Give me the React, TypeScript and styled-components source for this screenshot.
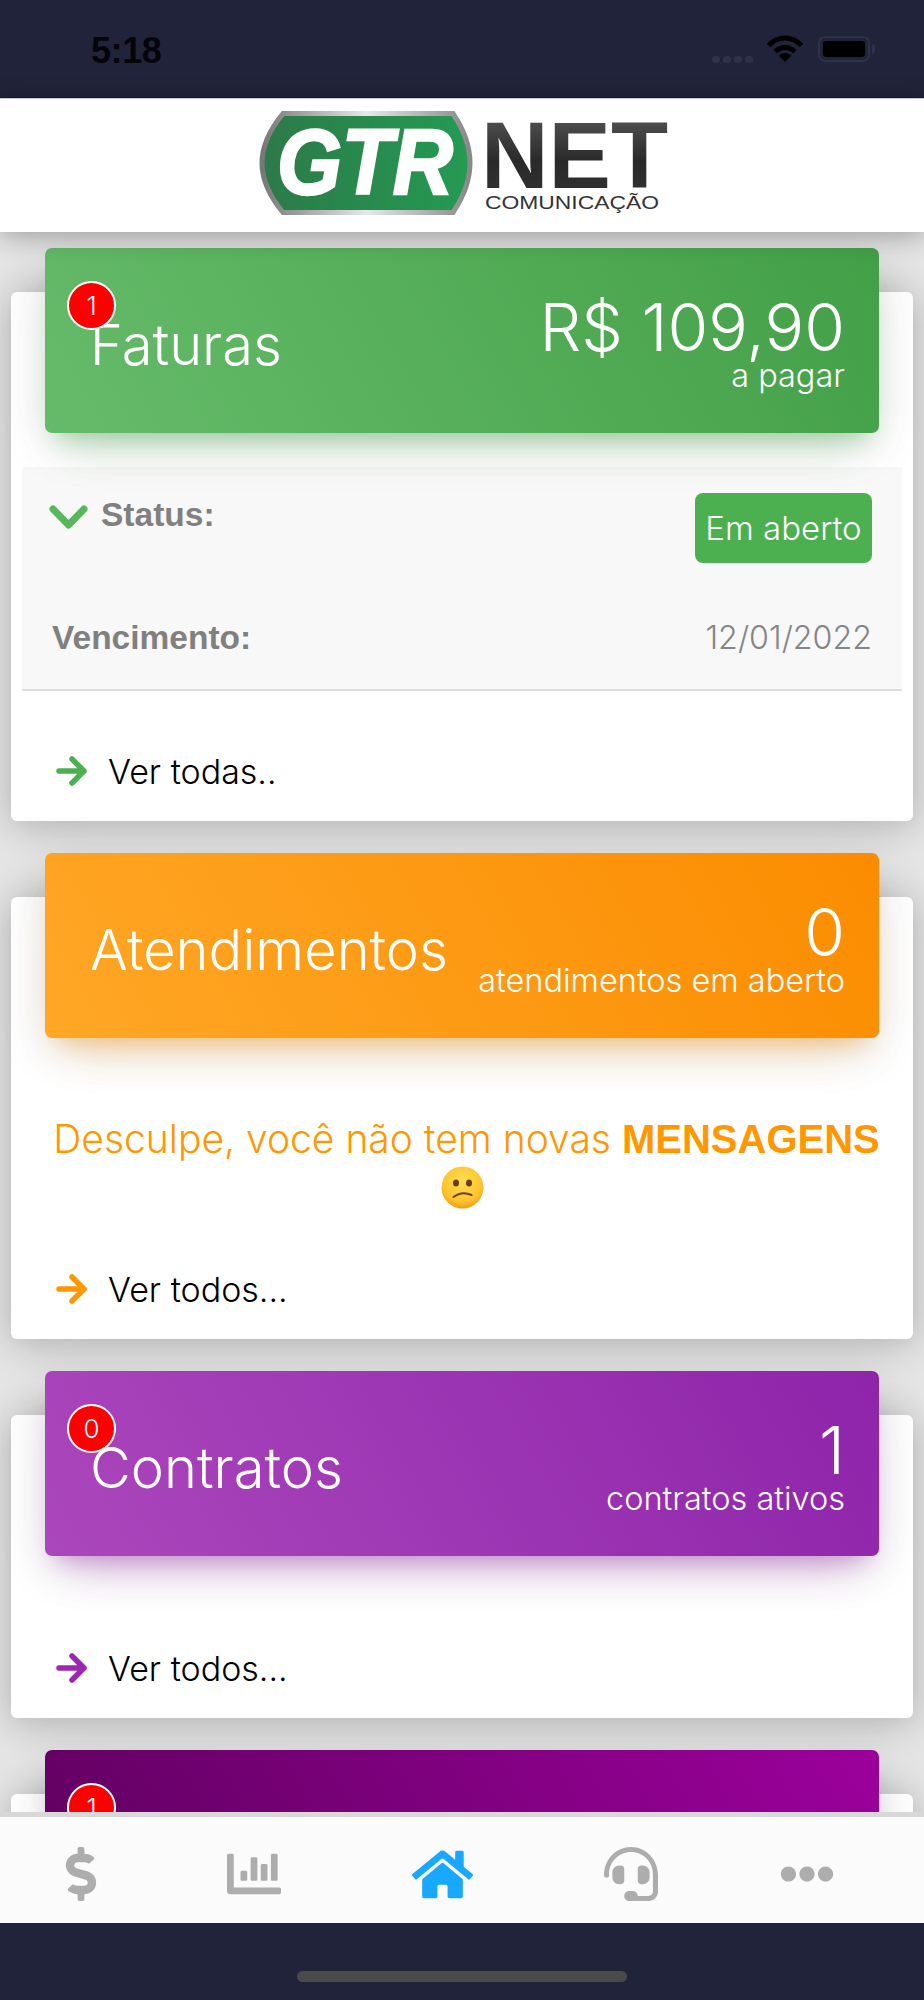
import React from "react";
import styled, { createGlobalStyle } from "styled-components";
import { FaDollarSign, FaChartBar, FaHome, FaHeadset, FaEllipsisH } from "react-icons/fa";

const SANS = `"Liberation Sans", Arial, sans-serif`;
const LIGHT = `Inter, "Liberation Sans", sans-serif`;

const Global = createGlobalStyle`
  html, body { margin: 0; padding: 0; background: #21233a; }
  * { box-sizing: border-box; }
`;

const Page = styled.div`
  width: 924px; height: 2000px; display: flex; flex-direction: column; overflow: hidden;
  font-family: ${LIGHT}; font-weight: 300;
`;
const StatusBar = styled.div`
  flex: 0 0 98px; background: #21233a; display: flex; align-items: center; justify-content: space-between;
  padding: 0 54px 0 91px; border-bottom: 1px solid #15162a;
`;
const Clock = styled.span`
  font-family: ${SANS}; font-weight: 700; font-size: 36px; color: #050509; letter-spacing: -0.4px; margin-top: 5px;
`;
const StatusIcons = styled.div`display: flex; align-items: center;`;
const Signal = styled.div`display: flex; gap: 3px; margin: 21px 14px 0 0;`;
const SignalDot = styled.span`width: 8px; height: 7px; border-radius: 3px; background: #2f3148;`;
const Battery = styled.div`
  position: relative; margin-left: 15px; width: 52px; height: 26px; padding: 3px;
  border: 2px solid #2f3148; border-radius: 7px;
`;
const BatteryFill = styled.div`width: 100%; height: 100%; background: #000; border-radius: 3px;`;
const BatteryCap = styled.div`
  position: absolute; right: -7px; top: 6px; width: 3px; height: 10px; background: #2f3148; border-radius: 0 3px 3px 0;
`;
const TopBar = styled.header`
  flex: 0 0 134px; background: #fff; display: flex; justify-content: center; align-items: center;
  border-top: 1px solid #c9ccd8; position: relative; z-index: 3; box-shadow: 0 4px 24px rgba(0,0,0,.3);
`;
const Content = styled.main`
  flex: 1 1 0; min-height: 0; overflow: hidden; background: #e4e4e4; padding: 60px 11px 0;
  display: flex; flex-direction: column; gap: 76px;
`;
const Card = styled.section`
  flex: none; background: #fff; border-radius: 6px;
  box-shadow: 0 4px 36px rgba(0,0,0,.24);
`;
const CardHead = styled.div<{ $from: string; $to: string; $glow: string }>`
  position: relative; height: 185px; margin: -44px 34px 0; border-radius: 7px; color: #fff;
  display: flex; align-items: center; justify-content: space-between; padding: 0 34px 0 45px;
  background: linear-gradient(60deg, ${p => p.$from}, ${p => p.$to});
  box-shadow: 0 30px 50px -25px ${p => p.$glow}, 0 10px 50px 0 rgba(0,0,0,.12), 0 17px 20px -12px ${p => p.$glow};
`;
const Badge = styled.span`
  position: absolute; left: 22px; top: 33px; width: 49px; height: 49px; border-radius: 50%;
  background: #f00; border: 2px solid #fff; color: #fff; display: flex; align-items: center; justify-content: center;
  font-size: 26px; z-index: 1;
`;
const Title = styled.h2`margin: 8px 0 0; font-size: 56px; font-weight: 300; line-height: 60px; white-space: nowrap;`;
const Figures = styled.div`text-align: right; margin-top: 4px;`;
const Value = styled.div`font-size: 66px; line-height: 66px;`;
const ValueLabel = styled.div`font-size: 32.5px; line-height: 32px;`;
const Panel = styled.div`
  margin: 34px 11px 0; padding: 26px 30px 21px; background: #f8f8f8; border-bottom: 2px solid #ddd;
`;
const PanelRow = styled.div<{ $gap?: number }>`
  display: flex; justify-content: space-between; align-items: flex-start; margin-top: ${p => p.$gap ?? 0}px;
`;
const StatusLabel = styled.div`display: flex; align-items: center; gap: 13px; margin-left: -3px; height: 44px;`;
const ChevronIcon = styled.svg`flex: none; margin-top: 4px;`;
const Label = styled.span`font-family: ${SANS}; font-weight: 700; font-size: 33.500px; line-height: 60px; color: #808080;`;
const Pill = styled.span`
  width: 177px; height: 70px; background: #4caf50; border-radius: 8px; color: #fff;
  display: flex; align-items: center; justify-content: center; font-size: 33px;
`;
const DateText = styled.span`font-size: 32.200px; line-height: 60px; color: #858585;`;
const Footer = styled.div<{ $top?: number }>`
  height: 100px; margin-top: ${p => p.$top ?? 0}px; padding-left: 45px; display: flex; align-items: center; gap: 21px;
  font-size: 34px; color: #000;
`;
const Message = styled.div`
  height: 201px; padding-top: 78px; text-align: center; color: #ff9800; font-size: 39px; line-height: 46px;
`;
const MessageLine = styled.div`padding-left: 9px; white-space: nowrap;`;
const Strong = styled.strong`font-family: ${SANS}; font-weight: 700; font-size: 40px;`;
const Face = styled.svg`display: block; margin: 4px auto 0;`;
const TabBar = styled.nav`
  flex: 0 0 111px; position: relative; z-index: 2; background: #fbfbfb; border-top: 5px solid #d8d8d8; padding-top: 8px;
  display: grid; grid-template-columns: 161px 186px 191px 186px 165px; align-items: center; justify-items: center;
`;
const Tab = styled.span<{ $active?: boolean }>`
  display: flex; color: ${p => (p.$active ? "#18a8ff" : "#adadad")};
`;
const HomeArea = styled.div`
  flex: 0 0 77px; background: #21233a; display: flex; justify-content: center; padding-top: 48px;
`;
const HomeBar = styled.div`width: 330px; height: 11px; border-radius: 6px; background: #4a4a4a;`;

const Wifi = () => (
  <svg width="36" height="27" viewBox="0 0 36 27" fill="none" stroke="#000" strokeWidth="5">
    <path d="M1.500 10.500C11 .5 25 .5 34.500 10.500" />
    <path d="M8 16.500C14 11 22 11 28 16.500" />
    <path d="M18 27L11.500 20.500Q18 15.500 24.500 20.500Z" fill="#000" stroke="none" />
  </svg>
);

const Chevron = () => (
  <ChevronIcon width="39" height="26" viewBox="0 0 39 26" fill="none" stroke="#57b85b" strokeWidth="7" strokeLinecap="round" strokeLinejoin="round">
    <path d="M4 5l15.500 16L35 5" />
  </ChevronIcon>
);

const Arrow = ({ color }: { color: string }) => (
  <svg width="31" height="30" viewBox="0 0 31 30" fill="none" stroke={color} strokeWidth="5.500" strokeLinecap="round" strokeLinejoin="round">
    <path d="M3 15h25M16 3l12 12-12 12" />
  </svg>
);

const Logo = () => (
  <svg width="420" height="110" viewBox="0 0 420 110">
    <defs>
      <linearGradient id="silver" x1="0" x2="1" y1="0" y2="0">
        <stop offset="0" stopColor="#777" />
        <stop offset=".5" stopColor="#e8e8e8" />
        <stop offset="1" stopColor="#888" />
      </linearGradient>
      <linearGradient id="green" x1="0" x2="1" y1="0" y2="0">
        <stop offset="0" stopColor="#2c7a48" />
        <stop offset="1" stopColor="#249b53" />
      </linearGradient>
      <linearGradient id="steel" x1="0" x2="0" y1="0" y2="1">
        <stop offset="0" stopColor="#5f5f5f" />
        <stop offset=".55" stopColor="#2a2a2a" />
        <stop offset="1" stopColor="#333" />
      </linearGradient>
    </defs>
    <path d="M31 2.500H201Q218 28 218 52T201 101.500H31Q10 76 10 52T31 2.500Z" fill="url(#green)" stroke="url(#silver)" strokeWidth="5" />
    <text x="25" y="83" fontFamily="Liberation Sans" fontWeight="700" fontStyle="italic" fontSize="92" fill="#fff" stroke="#fff" strokeWidth="2.500" textLength="176" lengthAdjust="spacingAndGlyphs">GTR</text>
    <text x="229" y="77" fontFamily="Liberation Sans" fontWeight="700" fontSize="95" fill="url(#steel)" textLength="187" lengthAdjust="spacingAndGlyphs">NET</text>
    <text x="233" y="98" fontFamily="Liberation Sans" fontWeight="400" fontSize="18" fill="#333" textLength="174" lengthAdjust="spacingAndGlyphs">COMUNICAÇÃO</text>
  </svg>
);

const SadFace = () => (
  <Face width="43" height="43" viewBox="0 0 43 43">
    <defs>
      <radialGradient id="skin" cx=".5" cy=".35" r=".7">
        <stop offset="0" stopColor="#ffdf55" />
        <stop offset=".7" stopColor="#fcc22c" />
        <stop offset="1" stopColor="#f08f0c" />
      </radialGradient>
    </defs>
    <circle cx="21.500" cy="21.500" r="21" fill="url(#skin)" />
    <ellipse cx="15" cy="17" rx="3" ry="3.500" fill="#6b3d10" />
    <ellipse cx="28" cy="17" rx="3" ry="3.500" fill="#6b3d10" />
    <path d="M12.500 31Q21 24.500 30.500 29" fill="none" stroke="#6b3d10" strokeWidth="2" strokeLinecap="round" />
  </Face>
);

const Head = (p: { from: string; to: string; glow: string; title: string; value: string; label: string; badge?: string }) => (
  <CardHead $from={p.from} $to={p.to} $glow={p.glow}>
    {p.badge && <Badge>{p.badge}</Badge>}
    <Title>{p.title}</Title>
    {p.value && (
      <Figures>
        <Value>{p.value}</Value>
        <ValueLabel>{p.label}</ValueLabel>
      </Figures>
    )}
  </CardHead>
);

export default function App() {
  return (
    <Page>
      <Global />
      <StatusBar>
        <Clock>5:18</Clock>
        <StatusIcons>
          <Signal><SignalDot /><SignalDot /><SignalDot /><SignalDot /></Signal>
          <Wifi />
          <Battery><BatteryFill /><BatteryCap /></Battery>
        </StatusIcons>
      </StatusBar>
      <TopBar><Logo /></TopBar>
      <Content>
        <Card>
          <Head from="#66bb6a" to="#43a047" glow="rgba(76,175,80,.3)" title="Faturas" value="R$ 109,90" label="a pagar" badge="1" />
          <Panel>
            <PanelRow>
              <StatusLabel><Chevron /><Label>Status:</Label></StatusLabel>
              <Pill>Em aberto</Pill>
            </PanelRow>
            <PanelRow $gap={45}>
              <Label>Vencimento:</Label>
              <DateText>12/01/2022</DateText>
            </PanelRow>
          </Panel>
          <Footer $top={30}><Arrow color="#4caf50" />Ver todas..</Footer>
        </Card>
        <Card>
          <Head from="#ffa726" to="#fb8c00" glow="rgba(255,152,0,.3)" title="Atendimentos" value="0" label="atendimentos em aberto" />
          <Message>
            <MessageLine>Desculpe, você não tem novas <Strong>MENSAGENS</Strong></MessageLine>
            <SadFace />
          </Message>
          <Footer><Arrow color="#ff9800" />Ver todos...</Footer>
        </Card>
        <Card>
          <Head from="#ab47bc" to="#8e24aa" glow="rgba(156,39,176,.3)" title="Contratos" value="1" label="contratos ativos" badge="0" />
          <Footer $top={62}><Arrow color="#9c27b0" />Ver todos...</Footer>
        </Card>
        <Card>
          <Head from="#5f005f" to="#9c009c" glow="rgba(140,0,140,.3)" title="" value="" label="" badge="1" />
          <Footer $top={62} />
        </Card>
      </Content>
      <TabBar>
        <Tab><FaDollarSign size={54} /></Tab>
        <Tab><FaChartBar size={54} /></Tab>
        <Tab $active><FaHome size={61} /></Tab>
        <Tab><FaHeadset size={54} /></Tab>
        <Tab><FaEllipsisH size={54} /></Tab>
      </TabBar>
      <HomeArea><HomeBar /></HomeArea>
    </Page>
  );
}
